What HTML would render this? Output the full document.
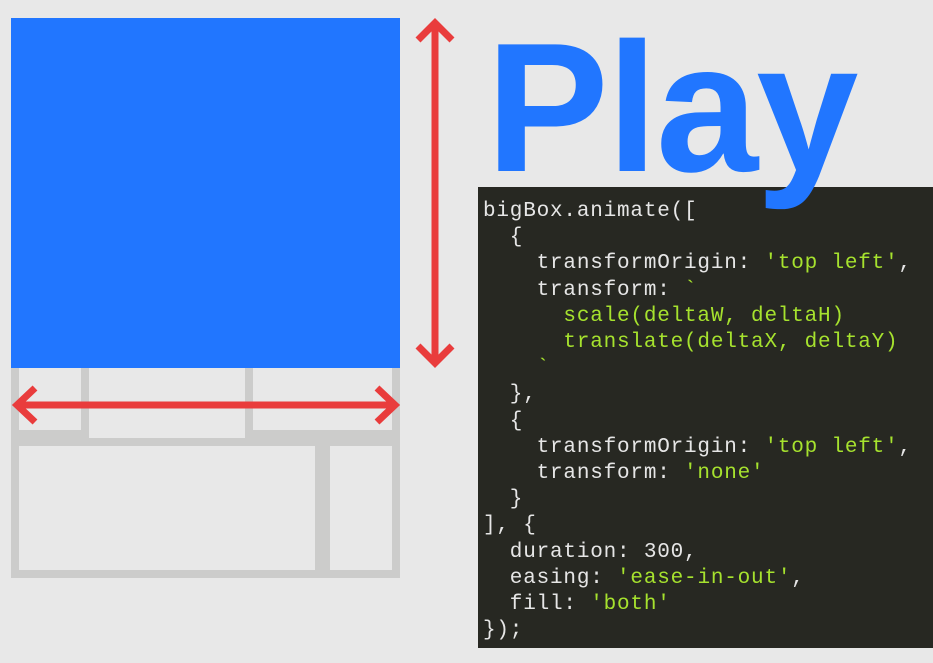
<!DOCTYPE html>
<html><head><style>
body{margin:0;width:933px;height:663px;background:#e8e8e8;position:relative;overflow:hidden}
.a{position:absolute}
.code{left:478px;top:187px;width:455px;height:461px;background:#272822;color:#e6e6e6;font-family:"Liberation Mono",monospace;font-size:21px;letter-spacing:0.8px;line-height:26.2px;white-space:pre;padding:0;box-sizing:border-box}
.code div{position:absolute;left:5px;top:12px}
.g{color:#a6e22e}
.play{left:486px;top:1px;font-family:"Liberation Sans",sans-serif;font-weight:bold;font-size:184px;color:#2176ff;letter-spacing:-2px;z-index:2;line-height:normal}
</style></head><body>
<div class="a" style="left:11px;top:368px;width:389px;height:210px;background:#cccccb"></div>
<div class="a" style="left:19px;top:368px;width:62px;height:62px;background:#e8e8e8"></div>
<div class="a" style="left:89px;top:368px;width:156px;height:70px;background:#e8e8e8"></div>
<div class="a" style="left:253px;top:368px;width:139px;height:62px;background:#e8e8e8"></div>
<div class="a" style="left:19px;top:446px;width:296px;height:124px;background:#e8e8e8"></div>
<div class="a" style="left:330px;top:446px;width:62px;height:124px;background:#e8e8e8"></div>
<div class="a" style="left:11px;top:18px;width:389px;height:350px;background:#2176ff"></div>
<svg class="a" style="left:0;top:0" width="470" height="440">
<g stroke="#e93c3c" stroke-width="7" fill="none">
<line x1="435" y1="24" x2="435" y2="362"/>
<polyline points="418,40 435,23 452,40"/>
<polyline points="418,346 435,363 452,346"/>
<line x1="16" y1="405" x2="396" y2="405"/>
<polyline points="35,388 17,405 35,422"/>
<polyline points="377,388 395,405 377,422"/>
</g></svg>
<div class="a play">Play</div>
<div class="a code"><div>bigBox.animate([
  {
    transformOrigin: <span class="g">'top left'</span>,
    transform: <span class="g">`
      scale(deltaW, deltaH)
      translate(deltaX, deltaY)
    `</span>
  },
  {
    transformOrigin: <span class="g">'top left'</span>,
    transform: <span class="g">'none'</span>
  }
], {
  duration: 300,
  easing: <span class="g">'ease-in-out'</span>,
  fill: <span class="g">'both'</span>
});</div></div>
</body></html>
